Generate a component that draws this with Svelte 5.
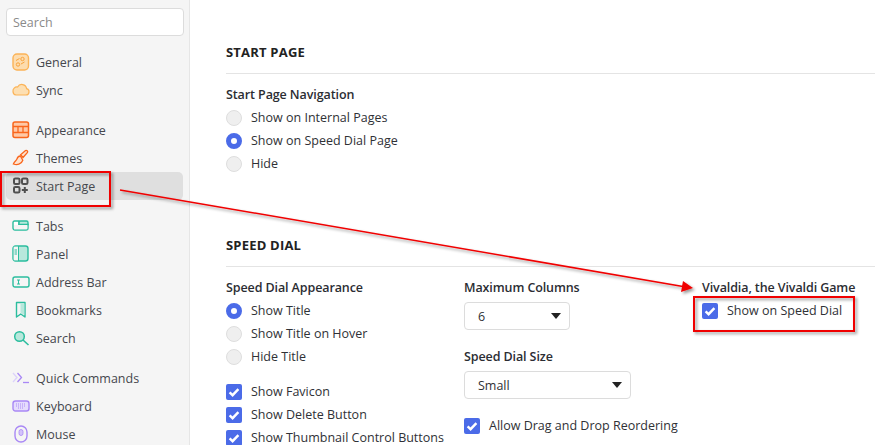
<script>
  const groups = [
    [{ name: 'General', icon: 'general' }, { name: 'Sync', icon: 'sync' }],
    [{ name: 'Appearance', icon: 'appearance' }, { name: 'Themes', icon: 'themes' }, { name: 'Start Page', icon: 'start', active: true }],
    [{ name: 'Tabs', icon: 'tabs' }, { name: 'Panel', icon: 'panel' }, { name: 'Address Bar', icon: 'address' }, { name: 'Bookmarks', icon: 'bookmarks' }, { name: 'Search', icon: 'search' }],
    [{ name: 'Quick Commands', icon: 'quick' }, { name: 'Keyboard', icon: 'keyboard' }, { name: 'Mouse', icon: 'mouse' }]
  ];
</script>

{#snippet radio(label, on)}
  <div class="opt"><span class="radio" class:on></span><span>{label}</span></div>
{/snippet}

{#snippet check(label)}
  <div class="opt">
    <span class="check">
      <svg width="16" height="16" viewBox="0 0 16 16"><path d="M3.6 8.4 6.6 11.2 12.4 5.2" fill="none" stroke="#fff" stroke-width="2.4" /></svg>
    </span>
    <span>{label}</span>
  </div>
{/snippet}

{#snippet select(value, cls)}
  <div class="select {cls}"><span>{value}</span><i class="caret"></i></div>
{/snippet}

{#snippet icon(kind)}
  <svg width="18" height="18" viewBox="0 0 18 18" fill="none">
    {#if kind === 'general'}
      <rect x="1" y="1" width="15.500" height="16" rx="4" fill="#fddcae" stroke="#fbb357" stroke-width="1.400" />
      <path d="M4 7.500 7.500 5.500M9 11 12.500 9" stroke="#f9a33c" />
      <circle cx="10.500" cy="6" r="1.700" stroke="#f9a33c" /><circle cx="6" cy="11.500" r="1.700" stroke="#f9a33c" />
    {:else if kind === 'sync'}
      <path d="M4 14h10a3.200 3.200 0 0 0 .6-6.300A4.800 4.800 0 0 0 5.600 6 4 4 0 0 0 1 10.500 3.500 3.500 0 0 0 4 14z" fill="#fddfb2" stroke="#fbb357" stroke-width="1.200" />
    {:else if kind === 'appearance'}
      <rect x="1" y="1" width="15.500" height="15.500" rx="2" fill="#ffc9a6" stroke="#f9661c" stroke-width="1.500" />
      <path d="M1 5.500h15M1 11.500h15M6 5.500v6M11 5.500v6" stroke="#f9661c" stroke-width="1.300" />
    {:else if kind === 'themes'}
      <path d="M11 8.500 15.500 3.400a1.400 1.400 0 0 0-2-1.800L8.600 5.800z" fill="#ffe3d0" stroke="#f9661c" stroke-width="1.300" />
      <path d="M8.400 7c-2.500.2-3.200 2-3.500 3.200-.3 1.300-2.500 2-3.500 4.800 3.500 1.200 8 .6 9.400-3.700z" fill="#ffe3d0" stroke="#f9661c" stroke-width="1.300" />
    {:else if kind === 'start'}
      <g stroke="#505050" stroke-width="2">
        <rect x="2" y="1.500" width="5.500" height="5.500" rx="1.300" /><rect x="10" y="1.500" width="5.500" height="5.500" rx="1.300" /><rect x="2" y="10" width="5.500" height="5.500" rx="1.300" />
        <path d="M12.800 10v6M9.800 13h6" />
      </g>
    {:else if kind === 'tabs'}
      <path d="M1 5.500A1.500 1.500 0 0 1 2.500 4H7v3.500h9V11a2 2 0 0 1-2 2H3a2 2 0 0 1-2-2z" fill="#fff" stroke="#2bbd9e" stroke-width="1.400" />
      <path d="M7 7.500V5.500A1.500 1.500 0 0 1 8.500 4h6A1.500 1.500 0 0 1 16 5.500v2z" fill="#b8e8dc" stroke="#2bbd9e" stroke-width="1.400" />
      <rect x="2" y="8" width="13.300" height="4.300" fill="#f5f5f5" />
    {:else if kind === 'panel'}
      <rect x="1" y="1" width="15" height="15" rx="2.500" fill="#b8e8dc" stroke="#2bbd9e" stroke-width="1.400" />
      <rect x="1.700" y="1.700" width="4.300" height="13.600" fill="#f5f5f5" />
      <path d="M6.500 1v15" stroke="#2bbd9e" />
      <path d="M2.500 5h2.500M2.500 7h2.500M2.500 9h2.500" stroke="#2bbd9e" />
    {:else if kind === 'address'}
      <rect x="1" y="4" width="16" height="10" rx="2" stroke="#2bbd9e" stroke-width="1.400" />
      <path d="M5 7h3M5 11h3M6.500 7v4" stroke="#2bbd9e" />
    {:else if kind === 'bookmarks'}
      <path d="M4.500 1.500h8.500v14.500l-4.250-3L4.500 16z" stroke="#2bbd9e" stroke-width="1.400" stroke-linejoin="round" />
      <path d="M8.500 2.500h3.800v11.500l-3.800-2.500z" fill="#b8e8dc" />
    {:else if kind === 'search'}
      <circle cx="7.500" cy="7.500" r="4.800" fill="#b8e8dc" stroke="#2bbd9e" stroke-width="1.500" />
      <path d="M11 11l5.500 5" stroke="#2bbd9e" stroke-width="1.600" />
    {:else if kind === 'quick'}
      <path d="M1 4 5 8.500 1 13" stroke="#dcd2fb" stroke-width="1.300" />
      <path d="M5.500 4 9.500 8.500 5.500 13" stroke="#a988f5" stroke-width="1.300" />
      <path d="M11 13.500h6" stroke="#a988f5" stroke-width="1.300" />
    {:else if kind === 'keyboard'}
      <rect x="1" y="4" width="16" height="10" rx="2.500" fill="#e5dcfd" stroke="#a988f5" stroke-width="1.400" />
      <path d="M4 7h10M4 9h10M6 11h6" stroke="#a988f5" stroke-dasharray="1 1" />
    {:else if kind === 'mouse'}
      <rect x="3" y="1" width="12" height="16" rx="6" stroke="#a988f5" stroke-width="1.400" />
      <rect x="7" y="4.500" width="4" height="6" rx="2" fill="#d3c3fb" stroke="#a988f5" stroke-width=".8" />
    {/if}
  </svg>
{/snippet}

<div class="page">
  <aside class="sidebar">
    <div class="search">Search</div>
    {#each groups as group}
      <ul>
        {#each group as item}
          <li class:active={item.active}>
            <span class="ico">{@render icon(item.icon)}</span>
            {item.name}
          </li>
        {/each}
      </ul>
    {/each}
  </aside>

  <main class="content">
    <section class="first">
      <h2>START PAGE</h2>
      <h3>Start Page Navigation</h3>
      {@render radio('Show on Internal Pages', false)}
      {@render radio('Show on Speed Dial Page', true)}
      {@render radio('Hide', false)}
    </section>

    <section>
      <h2>SPEED DIAL</h2>
      <div class="cols">
        <div class="col-a">
          <h3>Speed Dial Appearance</h3>
          {@render radio('Show Title', true)}
          {@render radio('Show Title on Hover', false)}
          {@render radio('Hide Title', false)}
          <div class="checks">
            {@render check('Show Favicon')}
            {@render check('Show Delete Button')}
            {@render check('Show Thumbnail Control Buttons')}
          </div>
        </div>
        <div class="col-b">
          <h3>Maximum Columns</h3>
          {@render select('6', 'narrow')}
          <h3 class="size">Speed Dial Size</h3>
          {@render select('Small', 'wide')}
          <div class="drag">{@render check('Allow Drag and Drop Reordering')}</div>
        </div>
        <div class="col-c">
          <h3>Vivaldia, the Vivaldi Game</h3>
          {@render check('Show on Speed Dial')}
        </div>
      </div>
    </section>
  </main>

  <!-- annotation layer drawn over the screenshot -->
  <svg class="notes" width="875" height="445" viewBox="0 0 875 445" fill="none">
    <defs>
      <filter id="sh" x="-10%" y="-10%" width="120%" height="130%">
        <feDropShadow dx="2" dy="2" stdDeviation="1.500" flood-color="#000" flood-opacity=".4" />
      </filter>
    </defs>
    <g filter="url(#sh)" stroke="#f00000">
      <rect x="1" y="172" width="109" height="34" stroke-width="2" />
      <rect x="694" y="297" width="160" height="34" stroke-width="2" />
      <path d="M120 190 683 286.500" stroke-width="1.500" />
      <path d="M693 288 681 292 683 281z" fill="#f00000" stroke="none" />
    </g>
  </svg>
</div>

<style>
  :global(body) {
    margin: 0;
    background: #fff;
  }

  .page {
    position: relative;
    display: flex;
    width: 875px;
    height: 445px;
    overflow: hidden;
    font-family: "Open Sans", "Noto Sans", sans-serif;
    font-size: 12.5px;
    color: #2f3136;
  }

  .sidebar {
    flex: none;
    box-sizing: border-box;
    width: 190px;
    height: 445px;
    padding: 8px 6px 0;
    background: #f5f5f5;
    border-right: 1px solid #e6e6e6;
  }

  .search {
    box-sizing: border-box;
    width: 178px;
    height: 28px;
    line-height: 26px;
    padding: 1px 0 0 6px;
    background: #fff;
    border: 1px solid #dcdcdc;
    border-radius: 4px;
    color: #8a8a8a;
  }

  ul {
    list-style: none;
    margin: 12px 0 0;
    padding: 0;
  }

  li {
    display: flex;
    align-items: center;
    height: 28px;
    gap: 6px;
    padding-left: 6px;
    border-radius: 5px;
    color: #45474d;
  }

  li.active {
    background: #dfdfdf;
  }

  .ico {
    display: flex;
    width: 18px;
    height: 18px;
  }

  .content {
    flex: 1;
    padding: 0 0 0 36px;
  }

  section.first {
    height: 235px;
    padding-top: 42px;
    box-sizing: border-box;
  }

  h2 {
    margin: 0 0 11px;
    padding-bottom: 11px;
    font-size: 13px;
    line-height: 20px;
    font-weight: 700;
    letter-spacing: 0.2px;
    color: #222;
    border-bottom: 1px solid #e4e4e4;
  }

  h3 {
    margin: 0 0 1px;
    font-size: 12.5px;
    line-height: 20px;
    font-weight: 600;
    letter-spacing: -0.1px;
    color: #2b2d33;
  }

  .opt {
    display: flex;
    align-items: center;
    height: 23px;
    gap: 9px;
  }

  .radio {
    flex: none;
    box-sizing: border-box;
    width: 16px;
    height: 16px;
    border-radius: 50%;
    background: #efefef;
    border: 1px solid #dedede;
  }

  .radio.on {
    background: #fff;
    border: 5px solid #4b6be8;
  }

  .check {
    flex: none;
    width: 16px;
    height: 16px;
    border-radius: 2px;
    background: #4b6be8;
  }

  .check svg {
    display: block;
  }

  .cols {
    display: flex;
  }

  .col-a {
    width: 238px;
  }

  .col-b {
    width: 238px;
  }

  .checks {
    margin-top: 12px;
  }

  .select {
    box-sizing: border-box;
    display: flex;
    align-items: center;
    justify-content: space-between;
    height: 28px;
    margin-top: 4px;
    padding: 0 8px 0 13px;
    background: #fff;
    border: 1px solid #dcdcdc;
    border-radius: 4px;
  }

  .narrow {
    width: 106px;
  }

  .wide {
    width: 167px;
  }

  .caret {
    width: 0;
    height: 0;
    border-left: 5px solid transparent;
    border-right: 5px solid transparent;
    border-top: 6px solid #222;
  }

  .size {
    margin-top: 17px;
  }

  .drag {
    margin-top: 15px;
  }

  .notes {
    position: absolute;
    left: 0;
    top: 0;
    pointer-events: none;
  }
</style>
